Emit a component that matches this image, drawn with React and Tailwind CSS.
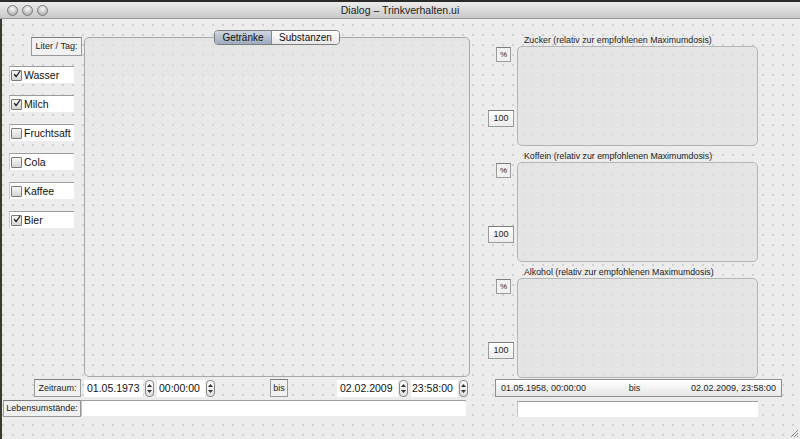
import React from 'react';

const font = { fontFamily: '"Liberation Sans", Arial, sans-serif' };

const grid =
  'bg-[#ececec] bg-[radial-gradient(circle,#c2c2c2_0.6px,transparent_0.9px)] bg-size-[10px_10px] bg-position-[-4px_1px]';

// Small framed label (QLabel with box frame)
const BoxLabel = ({ children, className = '' }) => (
  <div
    className={`flex items-center justify-center border border-[#9a9a9a] border-t-[#7d7d7d] bg-[#f1f1f1] text-[9px] text-[#222] leading-none ${className}`}
  >
    {children}
  </div>
);

const CheckRow = ({ label, checked }) => (
  <div className="ml-[9px] flex h-[17px] w-[65px] items-center border-t border-t-[#9c9c9c] border-l border-l-[#c8c8c8] bg-white pl-[1px]">
    <div className="flex h-[11px] w-[11px] items-center justify-center rounded-[1px] border border-[#7a7a7a] bg-gradient-to-b from-[#f6f6f6] to-[#d6d6d6]">
      {checked && (
        <svg width="11" height="11" viewBox="0 0 11 11" className="-mt-[2px] ml-[1px]">
          <path d="M2 5.5 L4.3 8.5 L9.5 1" stroke="#1e1e1e" strokeWidth="1.7" fill="none" strokeLinecap="round" strokeLinejoin="round" />
        </svg>
      )}
    </div>
    <span className="ml-[2px] text-[10.5px] leading-none text-[#111]">{label}</span>
  </div>
);

const Spinner = ({ className = '' }) => (
  <div className={`flex h-[17px] w-[9px] flex-col items-center justify-center gap-[3px] rounded-[4px] border border-[#8a8a8a] bg-gradient-to-b from-white to-[#e0e0e0] ${className}`}>
    <svg width="5" height="3" viewBox="0 0 5 3"><path d="M2.5 0 L5 3 L0 3 Z" fill="#333" /></svg>
    <svg width="5" height="3" viewBox="0 0 5 3"><path d="M0 0 L5 0 L2.5 3 Z" fill="#333" /></svg>
  </div>
);

const Field = ({ children, className = '' }) => (
  <div className={`flex h-[17px] items-center bg-white text-[10.5px] leading-none text-[#111] ${className}`}>{children}</div>
);

const ChartGroup = ({ title }) => (
  <div className="flex flex-col">
    <div className="h-[10px] pl-[36px] text-[8.8px] leading-[9px] text-[#222]">{title}</div>
    <div className="flex">
      <div className="flex w-[29px] flex-col">
        <BoxLabel className="ml-[8px] mt-[1px] h-[15px] w-[15px] !text-[8px]">%</BoxLabel>
        <BoxLabel className="mt-[48px] h-[17px] w-[26px] bg-gradient-to-b from-white to-[#ececec]">100</BoxLabel>
      </div>
      <div className="h-[100px] w-[241px] rounded-[5px] border border-[#b4b4b4] bg-[#e2e2e2]/70" />
    </div>
  </div>
);

export default function App() {
  return (
    <div className="relative flex h-[439px] w-[800px] flex-col overflow-hidden" style={font}>
      {/* title bar */}
      <div className="relative flex h-[19px] items-center border-t-2 border-t-[#2a2a2a] border-b border-b-[#9a9a9a] bg-gradient-to-b from-[#ececec] to-[#c9c9c9]">
        <div className="ml-[7px] flex gap-[4px]">
          {[0, 1, 2].map((i) => (
            <div
              key={i}
              className="h-[11px] w-[11px] rounded-full border border-[#7c7c7c] bg-[radial-gradient(circle_at_50%_30%,#fafafa_0%,#c7c7c7_55%,#9d9d9d_100%)]"
            />
          ))}
        </div>
        <div className="absolute left-0 right-0 text-center text-[10.5px] leading-none text-[#222]">Dialog – Trinkverhalten.ui</div>
      </div>

      {/* body */}
      <div className={`relative flex h-[420px] border-l-2 border-l-[#3a3a2e] ${grid}`}>
        {/* left part */}
        <div className="-ml-[2px] flex w-[488px] flex-col">
          <div className="mt-[18px] flex">
            <div className="flex w-[84px] flex-col">
              <BoxLabel className="ml-[31px] h-[19px] w-[51px]">Liter / Tag:</BoxLabel>
              <div className="mt-[10px] flex flex-col gap-[12px]">
                <CheckRow label="Wasser" checked />
                <CheckRow label="Milch" checked />
                <CheckRow label="Fruchtsaft" />
                <CheckRow label="Cola" />
                <CheckRow label="Kaffee" />
                <CheckRow label="Bier" checked />
              </div>
            </div>
            <div className="relative h-[340px] w-[386px] rounded-[5px] border border-[#a9a9a9] bg-gradient-to-b from-[#e2e2e2]/70 via-transparent to-transparent">
              {/* tabs */}
              <div className="absolute left-1/2 top-[-8px] flex h-[15px] -translate-x-1/2 overflow-hidden rounded-[4px] border border-[#7e7e7e] text-[10px] leading-none">
                <div className="flex w-[56px] items-center justify-center bg-gradient-to-b from-[#cfd7e2] to-[#9eabbd] text-[#111]">Getränke</div>
                <div className="flex w-[68px] items-center justify-center border-l border-l-[#8a8a8a] bg-gradient-to-b from-white to-[#e6e6e6] text-[#111]">Substanzen</div>
              </div>
            </div>
          </div>

          {/* Zeitraum row */}
          <div className="mt-[2px] flex h-[18px] items-center">
            <BoxLabel className="ml-[34px] h-[18px] w-[47px]">Zeitraum:</BoxLabel>
            <Field className="ml-[3px] w-[59px] pl-[3px]">01.05.1973</Field>
            <Spinner className="ml-[2px]" />
            <Field className="ml-[3px] w-[48px] pl-[2px]">00:00:00</Field>
            <Spinner className="ml-[1px]" />
            <BoxLabel className="ml-[55px] h-[18px] w-[18px]">bis</BoxLabel>
            <Field className="ml-[49px] w-[61px] pl-[3px]">02.02.2009</Field>
            <Spinner className="ml-[1px]" />
            <Field className="ml-[3px] w-[47px] pl-[1px]">23:58:00</Field>
            <Spinner className="ml-[1px]" />
          </div>

          {/* Lebensumstände row */}
          <div className="mt-[3px] flex h-[17px]">
            <BoxLabel className="ml-[3px] h-[17px] w-[78px]">Lebensumstände:</BoxLabel>
            <div className="h-[16px] w-[385px] border-t border-t-[#9c9c9c] border-l border-l-[#c0c0c0] bg-white" />
          </div>
        </div>

        {/* right part */}
        <div className="mt-[17px] flex flex-col gap-[6px]">
          <ChartGroup title="Zucker (relativ zur empfohlenen Maximumdosis)" />
          <ChartGroup title="Koffein (relativ zur empfohlenen Maximumdosis)" />
          <ChartGroup title="Alkohol (relativ zur empfohlenen Maximumdosis)" />
          <div className="-mt-[5px] ml-[7px] flex h-[18px] w-[287px] items-center justify-between border border-[#8e8e8e] bg-gradient-to-b from-white to-[#e6e6e6] px-[5px] text-[9px] leading-none text-[#222]">
            <span>01.05.1958, 00:00:00</span>
            <span className="-ml-[8px]">bis</span>
            <span>02.02.2009, 23:58:00</span>
          </div>
          <div className="-mt-[2px] ml-[29px] h-[16px] w-[241px] border-t border-t-[#9c9c9c] border-l border-l-[#c0c0c0] bg-white" />
        </div>

        {/* resize grip */}
        <svg className="absolute bottom-[1px] right-[1px]" width="10" height="10" viewBox="0 0 10 10">
          <path d="M9 2 L2 9 M9 5 L5 9 M9 8 L8 9" stroke="#8a8a8a" strokeWidth="1" />
        </svg>
      </div>
    </div>
  );
}
